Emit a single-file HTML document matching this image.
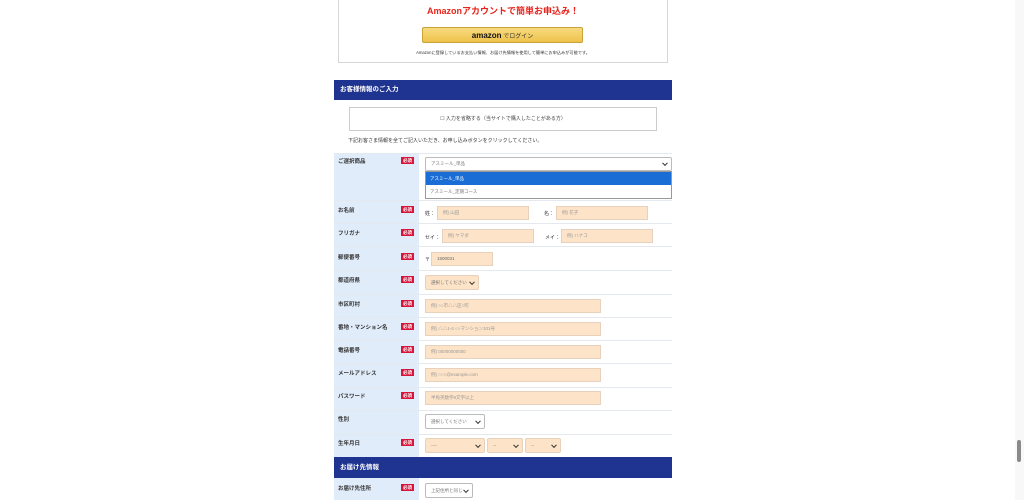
<!DOCTYPE html>
<html><head><meta charset="utf-8"><style>
*{margin:0;padding:0;box-sizing:border-box}
body{width:1024px;height:500px;overflow:hidden;background:#fff;font-family:"Liberation Sans","Noto Sans CJK JP",sans-serif;position:relative;color:#333}
.a{position:absolute}
.t{font-size:5px;color:#333;white-space:nowrap}
.lbl{position:absolute;left:338px;font-size:5.5px;font-weight:bold;color:#333;white-space:nowrap}
.req{position:absolute;left:401px;width:13px;height:7px;background:#d8143a;color:#fff;font-size:4.5px;text-align:center;line-height:7px;font-weight:bold}
.inp{position:absolute;background:#fde3c7;border:1px solid #e6d2bc;font-size:4.5px;color:#999;padding-left:5px;white-space:nowrap}
.sel{position:absolute;background:#fff;border:1px solid #bbb;border-radius:2px;font-size:4.5px;color:#777;padding-left:5px;white-space:nowrap}
.sel:after{content:"";position:absolute;right:4px;top:50%;width:3px;height:3px;border-right:1.3px solid #333;border-bottom:1.3px solid #333;transform:translateY(-70%) rotate(45deg)}
.sep{position:absolute;left:334px;width:338px;height:1px;background:#e4e9f0}
.hdr{position:absolute;left:334px;width:338px;background:#1f3390;color:#fff;font-weight:bold;font-size:6.5px;padding-left:6px}
</style></head><body>
<div class="a" style="left:338px;top:-2px;width:330px;height:65px;border:1px solid #d6d6d6"></div>
<div class="a" style="left:334px;top:4px;width:338px;text-align:center;color:#e8231b;font-weight:bold;font-size:9px">Amazonアカウントで簡単お申込み！</div>
<div class="a" style="left:422px;top:27px;width:161px;height:16px;background:linear-gradient(#f7db80,#eec14a);border:1px solid #c9a23a;border-radius:2px;text-align:center;font-size:6px;line-height:15px;color:#333"><b style="font-size:8px;color:#111">amazon</b> でログイン</div>
<div class="a t" style="left:334px;top:50px;width:338px;text-align:center;font-size:4.2px">Amazonに登録しているお支払い情報、お届け先情報を使用して簡単にお申込みが可能です。</div>
<div class="hdr" style="top:80px;height:20px;line-height:20px">お客様情報のご入力</div>
<div class="a" style="left:349px;top:107px;width:308px;height:24px;border:1px solid #ccc;text-align:center;font-size:5px;line-height:22px;color:#444">☐ 入力を省略する（当サイトで購入したことがある方）</div>
<div class="a t" style="left:348px;top:137px;font-size:5px">下記お客さま情報を全てご記入いただき、お申し込みボタンをクリックしてください。</div>
<div class="a" style="left:334px;top:153px;width:85px;height:304px;background:#e1ecfb"></div>
<div class="a" style="left:334px;top:478px;width:85px;height:22px;background:#e1ecfb"></div>
<div class="sep" style="top:153px"></div>
<div class="sep" style="top:200px"></div><div class="sep" style="top:223px"></div><div class="sep" style="top:246px"></div><div class="sep" style="top:270px"></div><div class="sep" style="top:294px"></div><div class="sep" style="top:317px"></div><div class="sep" style="top:340px"></div><div class="sep" style="top:363px"></div><div class="sep" style="top:387px"></div><div class="sep" style="top:410px"></div><div class="sep" style="top:434px"></div>

<div class="lbl" style="top:157px">ご選択商品</div><div class="req" style="top:157px">必須</div>
<div class="sel" style="left:425px;top:157px;width:247px;height:14px;line-height:12px">アスミール_単品</div>
<div class="a" style="left:425px;top:171px;width:247px;height:28px;border:1px solid #999;background:#fff"></div>
<div class="a" style="left:426px;top:172px;width:245px;height:13px;background:#1a6dd4;color:#fff;font-size:4.5px;line-height:13px;padding-left:4px">アスミール_単品</div>
<div class="a t" style="left:430px;top:189px;font-size:4.5px;color:#777">アスミール_定期コース</div>

<div class="lbl" style="top:206px">お名前</div><div class="req" style="top:206px">必須</div>
<div class="a t" style="left:425px;top:210px">姓：</div><div class="inp" style="left:437px;top:206px;width:92px;height:14px;line-height:12px">例) 山田</div>
<div class="a t" style="left:544px;top:210px">名：</div><div class="inp" style="left:556px;top:206px;width:92px;height:14px;line-height:12px">例) 花子</div>

<div class="lbl" style="top:229px">フリガナ</div><div class="req" style="top:229px">必須</div>
<div class="a t" style="left:425px;top:234px">セイ：</div><div class="inp" style="left:442px;top:229px;width:92px;height:14px;line-height:12px">例) ヤマダ</div>
<div class="a t" style="left:545px;top:234px">メイ：</div><div class="inp" style="left:561px;top:229px;width:92px;height:14px;line-height:12px">例) ハナコ</div>

<div class="lbl" style="top:253px">郵便番号</div><div class="req" style="top:253px">必須</div>
<div class="a t" style="left:425px;top:256px">〒</div><div class="inp" style="left:431px;top:252px;width:62px;height:14px;line-height:12px;color:#666">1500031</div>

<div class="lbl" style="top:276px">都道府県</div><div class="req" style="top:276px">必須</div>
<div class="sel" style="left:425px;top:275px;width:54px;height:15px;line-height:13px;background:#fde3c7;border-color:#e6d2bc">選択してください</div>

<div class="lbl" style="top:300px">市区町村</div><div class="req" style="top:300px">必須</div>
<div class="inp" style="left:425px;top:299px;width:176px;height:14px;line-height:12px">例) ○○市△△区○町</div>

<div class="lbl" style="top:323px">番地・マンション名</div><div class="req" style="top:323px">必須</div>
<div class="inp" style="left:425px;top:322px;width:176px;height:14px;line-height:12px">例) △△1-4 ○○マンション101号</div>

<div class="lbl" style="top:346px">電話番号</div><div class="req" style="top:346px">必須</div>
<div class="inp" style="left:425px;top:345px;width:176px;height:14px;line-height:12px">例) 00000000000</div>

<div class="lbl" style="top:369px">メールアドレス</div><div class="req" style="top:369px">必須</div>
<div class="inp" style="left:425px;top:368px;width:176px;height:14px;line-height:12px">例) ○○○@example.com</div>

<div class="lbl" style="top:392px">パスワード</div><div class="req" style="top:392px">必須</div>
<div class="inp" style="left:425px;top:391px;width:176px;height:14px;line-height:12px">半角英数字8文字以上</div>

<div class="lbl" style="top:415px">性別</div>
<div class="sel" style="left:425px;top:414px;width:60px;height:15px;line-height:13px">選択してください</div>

<div class="lbl" style="top:439px">生年月日</div><div class="req" style="top:439px">必須</div>
<div class="sel" style="left:425px;top:438px;width:60px;height:15px;line-height:13px;background:#fde3c7;border-color:#e6d2bc">----</div>
<div class="sel" style="left:487px;top:438px;width:36px;height:15px;line-height:13px;background:#fde3c7;border-color:#e6d2bc">--</div>
<div class="sel" style="left:525px;top:438px;width:36px;height:15px;line-height:13px;background:#fde3c7;border-color:#e6d2bc">--</div>

<div class="hdr" style="top:457px;height:21px;line-height:21px">お届け先情報</div>
<div class="lbl" style="top:484px">お届け先住所</div><div class="req" style="top:484px">必須</div>
<div class="sel" style="left:425px;top:483px;width:48px;height:15px;line-height:13px">上記住所と同じ</div>

<div class="a" style="left:1015px;top:0;width:9px;height:500px;background:#f8f8f8"></div>
<div class="a" style="left:1017px;top:440px;width:4px;height:22px;background:#8a8a8a;border-radius:2px"></div>
</body></html>
